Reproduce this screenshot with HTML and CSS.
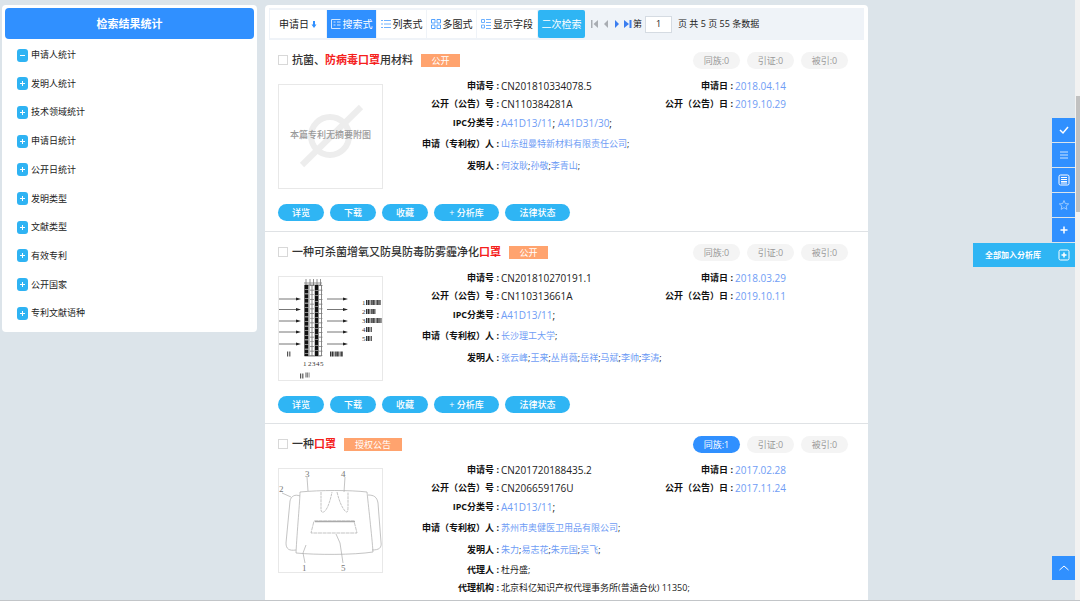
FILE: index.html
```html
<!DOCTYPE html>
<html lang="zh-CN">
<head>
<meta charset="utf-8">
<title>检索结果</title>
<link rel="stylesheet" href="styles.css">
</head>
<body>
<svg class="defs" aria-hidden="true">
  <symbol id="plus" viewBox="0 0 11 13"><path d="M3 6.500h5M5.500 4v5" stroke="#fff" fill="none"/></symbol>
  <symbol id="minus" viewBox="0 0 11 13"><path d="M3 6.500h5" stroke="#fff" fill="none"/></symbol>
</svg>
<div class="page">
  <aside class="stats">
    <h2 class="stats-title">检索结果统计</h2>
    <ul class="stats-list">
      <li><button class="stat"><svg class="toggle"><use href="#minus"/></svg>申请人统计</button></li>
      <li><button class="stat"><svg class="toggle"><use href="#plus"/></svg>发明人统计</button></li>
      <li><button class="stat"><svg class="toggle"><use href="#plus"/></svg>技术领域统计</button></li>
      <li><button class="stat"><svg class="toggle"><use href="#plus"/></svg>申请日统计</button></li>
      <li><button class="stat"><svg class="toggle"><use href="#plus"/></svg>公开日统计</button></li>
      <li><button class="stat"><svg class="toggle"><use href="#plus"/></svg>发明类型</button></li>
      <li><button class="stat"><svg class="toggle"><use href="#plus"/></svg>文献类型</button></li>
      <li><button class="stat"><svg class="toggle"><use href="#plus"/></svg>有效专利</button></li>
      <li><button class="stat"><svg class="toggle"><use href="#plus"/></svg>公开国家</button></li>
      <li><button class="stat"><svg class="toggle"><use href="#plus"/></svg>专利文献语种</button></li>
    </ul>
  </aside>

  <main class="results">
    <div class="toolbar">
      <button class="tab tab-sort">申请日<svg class="arrow" viewBox="0 0 6 10"><path d="M2 2h2v3.500h1.500L3 9 .5 5.500H2z" fill="#3090ff"/></svg></button>
      <button class="tab tab-active"><svg class="ico" viewBox="0 0 10 10"><path d="M9.500 .5h-9v9h9M2.500 3h2M2.500 6h2M6 3h3.500M6 6h3.500" stroke="#cfe6ff" fill="none"/></svg>搜索式</button>
      <button class="tab"><svg class="ico" viewBox="0 0 10 10"><path d="M0 1.500h2M0 5h2M0 8.500h2M3 1.500h7M3 5h7M3 8.500h7" stroke="#6db1ff" fill="none"/></svg>列表式</button>
      <button class="tab"><svg class="ico" viewBox="0 0 10 10"><path d="M.5 .5h3.500v3.500h-3.500zM6 .5h3.500v3.500H6zM.5 6h3.500v3.500h-3.500zM6 6h3.500v3.500H6z" stroke="#55a3ff" fill="none"/></svg>多图式</button>
      <button class="tab tab-fields"><svg class="ico" viewBox="0 0 10 10"><path d="M.5 .5h3v3h-3zM.5 6h3v3h-3zM5 .5h5M5 3.500h5M5 6.500h5M5 9.500h5" stroke="#6db1ff" fill="none"/></svg>显示字段</button>
      <button class="tab tab-again">二次检索</button>
      <div class="pager">
        <button class="nav" aria-label="首页"><svg viewBox="0 0 8 8"><path d="M0 0h1.500v8H0zM7 0v8L2.500 4z" fill="#a9adb3"/></svg></button>
        <button class="nav" aria-label="上一页"><svg viewBox="0 0 8 8"><path d="M6 0v8L2 4z" fill="#a9adb3"/></svg></button>
        <button class="nav" aria-label="下一页"><svg viewBox="0 0 8 8"><path d="M2 0v8l4-4z" fill="#3a7df0"/></svg></button>
        <button class="nav" aria-label="末页"><svg viewBox="0 0 8 8"><path d="M0 0v8l5-4zM5.500 0H7.500v8H5.500z" fill="#3a7df0"/></svg></button>
        <label class="pagelabel" for="pageno">第</label>
        <input class="pageno" id="pageno" type="text" value="1">
        <span>页 共 5 页 55 条数据</span>
      </div>
    </div>

    <article class="record">
      <header class="head">
        <input class="check" type="checkbox" id="r1"><label class="title" for="r1">抗菌、<em>防病毒口罩</em>用材料</label>
        <span class="tag">公开</span>
        <div class="counts"><button class="count">同族:0</button><button class="count">引证:0</button><button class="count">被引:0</button></div>
      </header>
      <div class="body">
        <div class="figure">
          <svg viewBox="0 0 103 103"><circle cx="51" cy="51" r="19" fill="none" stroke="#ededed" stroke-width="6"/><path d="M23 80L82 22" stroke="#ededed" stroke-width="6"/></svg>
          <span class="nofig">本篇专利无摘要附图</span>
        </div>
        <dl class="fields">
          <dt>申请号 :</dt><dd class="num">CN201810334078.5</dd><dt>申请日 :</dt><dd class="num"><a href="#">2018.04.14</a></dd>
          <dt>公开（公告）号 :</dt><dd class="num">CN110384281A</dd><dt>公开（公告）日 :</dt><dd class="num"><a href="#">2019.10.29</a></dd>
          <dt class="first">IPC分类号 :</dt><dd class="wide num"><a href="#">A41D13/11</a>; <a href="#">A41D31/30</a>;</dd>
          <dt class="first">申请（专利权）人 :</dt><dd class="wide"><a href="#">山东纽曼特新材料有限责任公司</a>;</dd>
          <dt class="first">发明人 :</dt><dd class="wide"><a href="#">何汝耿</a>;<a href="#">孙敬</a>;<a href="#">李青山</a>;</dd>
        </dl>
      </div>
      <div class="actions"><button class="act">详览</button><button class="act">下载</button><button class="act">收藏</button><button class="act act-long">+ 分析库</button><button class="act act-long">法律状态</button></div>
    </article>

    <article class="record">
      <header class="head">
        <input class="check" type="checkbox" id="r2"><label class="title" for="r2">一种可杀菌增氧又防臭防毒防雾霾净化<em>口罩</em></label>
        <span class="tag">公开</span>
        <div class="counts"><button class="count">同族:0</button><button class="count">引证:0</button><button class="count">被引:0</button></div>
      </header>
      <div class="body">
        <div class="figure">
          <svg viewBox="0 0 103 103">
            <path d="M27 2v6M31 2v6M34.500 2v6M38 2v6M41.500 2v6M25 6h18" stroke="#777" fill="none" stroke-width=".8"/>
            <path d="M25.500 8h17v71h-17zM30 8v71M33 8v71M36 8v71M39.500 8v71" fill="none" stroke="#555" stroke-width=".7"/>
            <path d="M27.500 8v71" stroke="#111" stroke-width="3.500" stroke-dasharray="4 .6"/>
            <path d="M37.500 8v71" stroke="#111" stroke-width="3" stroke-dasharray="5 .5"/>
            <path d="M33 8v71M41.500 8v71" stroke="#777" stroke-width="4" stroke-dasharray=".7 4"/>
            <path d="M0 22h19M0 32.500h19M0 44h19M0 55h19M0 67h19M48 22h18M48 32.500h18M48 44h18M48 55h18M48 67h18" stroke="#777" fill="none"/>
            <path d="M17 20.500l5 1.500-5 1.500zM17 31l5 1.500-5 1.500zM17 42.500l5 1.500-5 1.500zM17 53.500l5 1.500-5 1.500zM17 65.500l5 1.500-5 1.500zM64 20.500l5 1.500-5 1.500zM64 31l5 1.500-5 1.500zM64 42.500l5 1.500-5 1.500zM64 53.500l5 1.500-5 1.500zM64 65.500l5 1.500-5 1.500z" fill="#222"/>
            <g class="keys"><text x="83" y="28">1</text><text x="83" y="37">2</text><text x="83" y="46">3</text><text x="83" y="55">4</text><text x="83" y="64">5</text>
            <text x="24" y="89">1</text><text x="29" y="89">2</text><text x="33" y="89">3</text><text x="37" y="89">4</text><text x="41" y="89">5</text></g>
            <path d="M87 25.500h15M87 34.500h10M87 43.500h16M87 52.500h6M87 61.500h6M51 77h13" stroke="#333" stroke-width="5" stroke-dasharray="1 .5 1.600 .4 .7 .6"/>
            <path d="M8 77h4M21 99h4M26.500 98h4" stroke="#555" stroke-width="5" stroke-dasharray="1 .8"/>
          </svg>
        </div>
        <dl class="fields">
          <dt>申请号 :</dt><dd class="num">CN201810270191.1</dd><dt>申请日 :</dt><dd class="num"><a href="#">2018.03.29</a></dd>
          <dt>公开（公告）号 :</dt><dd class="num">CN110313661A</dd><dt>公开（公告）日 :</dt><dd class="num"><a href="#">2019.10.11</a></dd>
          <dt class="first">IPC分类号 :</dt><dd class="wide num"><a href="#">A41D13/11</a>;</dd>
          <dt class="first">申请（专利权）人 :</dt><dd class="wide"><a href="#">长沙理工大学</a>;</dd>
          <dt class="first">发明人 :</dt><dd class="wide"><a href="#">张云峰</a>;<a href="#">王来</a>;<a href="#">丛肖薇</a>;<a href="#">岳祥</a>;<a href="#">马斌</a>;<a href="#">李帅</a>;<a href="#">李涛</a>;</dd>
        </dl>
      </div>
      <div class="actions"><button class="act">详览</button><button class="act">下载</button><button class="act">收藏</button><button class="act act-long">+ 分析库</button><button class="act act-long">法律状态</button></div>
    </article>

    <article class="record">
      <header class="head">
        <input class="check" type="checkbox" id="r3"><label class="title" for="r3">一种<em>口罩</em></label>
        <span class="tag tag-long">授权公告</span>
        <div class="counts"><button class="count count-on">同族:1</button><button class="count">引证:0</button><button class="count">被引:0</button></div>
      </header>
      <div class="body">
        <div class="figure">
          <svg viewBox="0 0 103 103">
            <g fill="none" stroke="#aaa" stroke-width=".7">
              <path d="M21 23c20-2 50-2 67 0M21 23c0 8-3 40-4 61M88 23c1 10 5 45 6 60M17 84c20 2 58 2 77-1"/>
              <path d="M21 27c-5-2-9 0-10 5L7 74c0 6 3 8 10 7M89 26c6 0 9 2 10 8l3 39c1 6-2 8-9 8"/>
              <path d="M42 23v18c1 5 5 1 7-4s3-9 4-14M58 23c2 8 4 14 8 19 3 3 3-1 3-5V23" stroke-dasharray="3 .6"/>
              <path d="M35 52h40l3 12H32z" stroke-dasharray="4 .6"/><path d="M36 52.500h40" stroke-width="1.500"/>
              <path d="M28 8l1 14M66 8l-1 15M3 24l9 4M26 94l-2-10 3-8M64 94l-3-20-4-9"/>
            </g>
            <g class="refs"><text x="26" y="8">3</text><text x="62" y="8">4</text><text x="0" y="23">2</text><text x="23" y="102">1</text><text x="62" y="102">5</text></g>
          </svg>
        </div>
        <dl class="fields">
          <dt>申请号 :</dt><dd class="num">CN201720188435.2</dd><dt>申请日 :</dt><dd class="num"><a href="#">2017.02.28</a></dd>
          <dt>公开（公告）号 :</dt><dd class="num">CN206659176U</dd><dt>公开（公告）日 :</dt><dd class="num"><a href="#">2017.11.24</a></dd>
          <dt class="first">IPC分类号 :</dt><dd class="wide num"><a href="#">A41D13/11</a>;</dd>
          <dt class="first">申请（专利权）人 :</dt><dd class="wide"><a href="#">苏州市奥健医卫用品有限公司</a>;</dd>
          <dt class="first">发明人 :</dt><dd class="wide"><a href="#">朱力</a>;<a href="#">易志花</a>;<a href="#">朱元国</a>;<a href="#">吴飞</a>;</dd>
          <dt class="first">代理人 :</dt><dd class="wide">杜丹盛;</dd>
          <dt class="first">代理机构 :</dt><dd class="wide">北京科亿知识产权代理事务所(普通合伙) 11350;</dd>
        </dl>
      </div>
    </article>
  </main>
</div>

<nav class="dock">
  <button class="dock-btn" aria-label="全选"><svg viewBox="0 0 12 12"><path d="M2 6l3 3 5-6" stroke="#fff" stroke-width="1.500" fill="none"/></svg></button>
  <button class="dock-btn" aria-label="列表"><svg viewBox="0 0 12 12"><path d="M2 3h8M2 6h8M2 9h8" stroke="#cfe5ff" fill="none"/></svg></button>
  <button class="dock-btn" aria-label="详情"><svg viewBox="0 0 12 12"><rect x="1" y="1" width="10" height="10" rx="1.500" stroke="#fff" fill="none"/><path d="M3 3.500h6M3 5.500h6M3 7.500h6M3 9h6" stroke="#fff" fill="none"/></svg></button>
  <button class="dock-btn" aria-label="收藏"><svg viewBox="0 0 12 12"><path d="M6 1.500l1.300 3.100 3.400.3-2.600 2.200.8 3.300L6 8.700l-2.900 1.700.8-3.300L1.300 4.900l3.400-.3z" stroke="#b5d7ff" stroke-width=".8" fill="none"/></svg></button>
  <button class="dock-btn" aria-label="添加"><svg viewBox="0 0 12 12"><path d="M2.500 6h7M6 2.500v7" stroke="#fff" stroke-width="1.500" fill="none"/></svg></button>
  <button class="dock-btn dock-wide">全部加入分析库<svg viewBox="0 0 12 12"><rect x="1" y="1" width="10" height="10" rx="1.500" stroke="#fff" fill="none"/><path d="M3.500 6h5M6 3.500v5" stroke="#fff" stroke-width="1.500" fill="none"/></svg></button>
</nav>
<button class="dock-btn to-top" aria-label="返回顶部"><svg viewBox="0 0 12 12"><path d="M1.500 8L6 4l4.500 4" stroke="#fff" fill="none"/></svg></button>
<div class="track"><div class="thumb"></div></div>
</body>
</html>
```

FILE: styles.css
```css
* { box-sizing: border-box; }
body {
  margin: 0;
  height: 100vh;
  overflow: hidden;
  background: #fff;
  color: #222;
  font: 9px/18px "Open Sans", "Noto Sans CJK SC", sans-serif;
}
button { margin: 0; padding: 0; border: 0; background: none; font: inherit; color: inherit; white-space: nowrap; }
a { color: #6f9df5; text-decoration: none; }
.defs { position: absolute; width: 0; height: 0; }

.page {
  display: flex;
  align-items: flex-start;
  gap: 8px;
  height: calc(100vh - 2px);
  overflow: hidden;
  padding: 5px 5px 0 2px;
  background: #dce4ea;
  border-bottom: 1px solid #c2c5c8;
}

/* statistics sidebar */
.stats { flex: 0 0 24%; max-width: 255px; padding: 3px 3px 4px; border-radius: 4px; background: #fff; }
.stats-title { margin: 0; border-radius: 4px; background: #3090ff; color: #fff; font-size: 11px; line-height: 31px; text-align: center; }
.stats-list { display: grid; grid-auto-rows: 1fr; min-height: 287px; margin: 2px 0 0; padding: 0 0 0 12px; list-style: none; }
.stat { display: flex; align-items: center; gap: 3px; height: 28px; }
.toggle { width: 11px; height: 13px; border-radius: 3px; background: #2fb3f3; }

/* results column */
.results { flex: 0 0 56.2%; min-height: 100%; border-radius: 4px 4px 0 0; background: #fff; }
.toolbar { display: flex; align-items: center; gap: 1px; height: 32px; margin: 3px 4px 0; padding-left: 1px; background: #eff3f8; font-size: 10px; }
.tab { display: flex; flex: none; align-items: center; justify-content: center; gap: 2px; width: 49px; height: 28px; background: #fff; }
.tab-sort { width: 56px; }
.tab-fields { width: 60px; }
.tab-active { background: #3090ff; color: #fff; }
.tab-again { width: 47px; border-radius: 2px; background: #2fb5f4; color: #fff; }
.ico { width: 10px; height: 10px; }
.arrow { width: 6px; height: 10px; }
.pager { display: flex; align-items: center; gap: 3px; padding-left: 5px; font-size: 9px; white-space: nowrap; }
.nav { display: flex; width: 8px; }
.nav svg { width: 8px; height: 8px; }
.pagelabel { margin-left: -2px; }
.pageno { width: 27px; height: 17px; margin-right: 3px; padding: 0; border: 1px solid #d5dbe2; background: #fff; font: inherit; color: #222; text-align: center; }

.record { padding: 10px 20px 10px 13px; border-bottom: 1px solid #dfe2e5; }
.head { display: flex; align-items: center; height: 20px; }
.check { appearance: none; width: 10px; height: 10px; margin: 0 4px 0 0; border: 1px solid #d8d8d8; background: #fff; }
.title { font-size: 11px; font-weight: 500; white-space: nowrap; color: #333; }
.title em { font-style: normal; font-weight: 700; color: #f5201c; }
.tag { width: 39px; margin-left: 8px; background: #ffa36e; color: #fff; line-height: 13px; text-align: center; }
.tag-long { width: 58px; }
.counts { display: flex; gap: 7px; margin-left: auto; }
.count { width: 47px; height: 17px; border-radius: 9px; background: #f4f4f4; color: #999; line-height: 17px; }
.count-on { background: #3090ff; color: #fff; }

.body { display: flex; align-items: flex-start; padding-top: 7px; }
.figure { position: relative; flex: none; width: 105px; height: 105px; margin-top: 7px; border: 1px solid #e8e8e8; background: #fff; }
.figure svg { display: block; width: 100%; height: 100%; }
.nofig { position: absolute; inset: 0; display: flex; align-items: center; justify-content: center; padding-bottom: 4px; color: #999; font-weight: 500; white-space: nowrap; }
.refs { fill: #777; font: 9px "Liberation Serif", serif; }
.keys { fill: #333; font: 7px "Liberation Serif", serif; }

.fields {
  flex: 1;
  display: grid;
  grid-template-columns: 116px 1fr 80px 113px;
  grid-template-rows: 18px 18px 20px 22px 22px;
  grid-auto-rows: 18px;
  column-gap: 2px;
  align-items: center;
  margin: 0;
  white-space: nowrap;
}
.fields dt { font-weight: 700; color: #111; text-align: right; }
.fields dd { margin: 0; }
.fields .first { grid-column: 1; }
.fields .wide { grid-column: 2 / -1; }
.num { font-size: 10px; }

.actions { display: flex; gap: 6px; padding-top: 15px; }
.act { width: 46px; height: 17px; border-radius: 9px; background: #2fb5f4; color: #fff; font-weight: 500; line-height: 17px; }
.act-long { width: 65px; }

/* floating tools over the page */
.dock { position: fixed; top: 118px; right: 5px; display: flex; flex-direction: column; align-items: flex-end; gap: 1px; }
.dock-btn { display: flex; align-items: center; justify-content: center; width: 23px; height: 24px; background: #3090ff; }
.dock-btn svg { flex: none; width: 12px; height: 12px; }
.dock-wide { justify-content: space-between; width: auto; gap: 17px; padding: 0 5px 0 12px; background: #2fb5f4; color: #fff; font-size: 8px; font-weight: 700; }
.to-top { position: fixed; right: 5px; bottom: 23px; }
.track { position: fixed; inset: 0 0 3px auto; width: 5px; padding: 96px 0 0 1px; background: #f2f2f2; }
.thumb { height: 116px; background: #c1c1c1; }
```
